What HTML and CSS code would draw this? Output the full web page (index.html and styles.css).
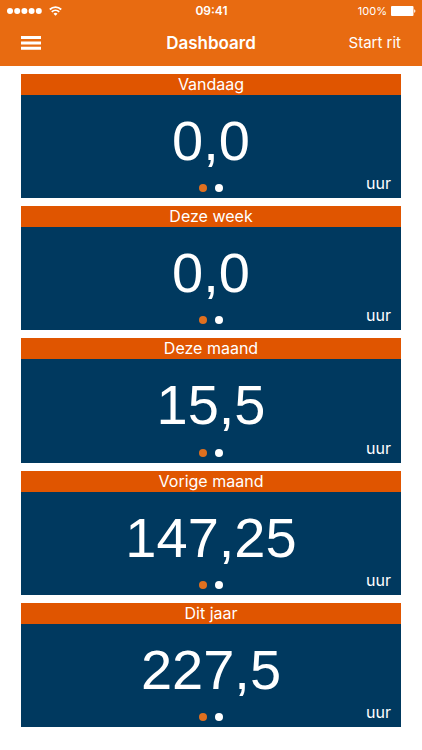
FILE: index.html
```html
<!DOCTYPE html>
<html lang="nl">
<head>
<meta charset="utf-8">
<meta name="viewport" content="width=device-width, initial-scale=1">
<title>Dashboard</title>
<link rel="stylesheet" href="styles.css">
</head>
<body>
<header class="top">
  <div class="status">
    <div class="status-left">
      <svg class="signal" width="35" height="6" viewBox="0 0 35 6" aria-hidden="true"><circle cx="3" cy="3" r="3"/><circle cx="10.2" cy="3" r="3"/><circle cx="17.4" cy="3" r="3"/><circle cx="24.6" cy="3" r="3"/><circle cx="31.8" cy="3" r="3"/></svg>
      <svg class="wifi" width="13" height="10" viewBox="0 0 13 10" aria-hidden="true"><path d="M.8 3.5a8.2 8.2 0 0 1 11.4 0M2.8 5.8a5.3 5.3 0 0 1 7.4 0"/><path class="wifi-core" d="M6.5 9.8 4.5 7.8a2.9 2.9 0 0 1 4 0z"/></svg>
    </div>
    <span class="time">09:41</span>
    <div class="status-right">
      <span class="percent">100%</span>
      <svg class="battery" width="25" height="10" viewBox="0 0 25 10" aria-hidden="true"><rect width="22.5" height="10" rx="1"/><path d="M23.2 3.2c1.6.4 1.6 3.2 0 3.6z"/></svg>
    </div>
  </div>
  <nav class="bar">
    <button class="menu" type="button" aria-label="Menu"><svg width="20" height="14" viewBox="0 0 20 14" aria-hidden="true"><path d="M0 0h20v3H0zM0 5.4h20v3H0zM0 10.8h20v3H0z"/></svg></button>
    <h1 class="title">Dashboard</h1>
    <button class="start" type="button">Start rit</button>
  </nav>
</header>
<main class="cards">
  <section class="card">
    <h2 class="card-title">Vandaag</h2>
    <div class="card-body">
      <p class="value">0,0</p>
      <div class="card-foot"><div class="dots"><button class="dot active" type="button" aria-label="Pagina 1"></button><button class="dot" type="button" aria-label="Pagina 2"></button></div><span class="unit">uur</span></div>
    </div>
  </section>
  <section class="card">
    <h2 class="card-title">Deze week</h2>
    <div class="card-body">
      <p class="value">0,0</p>
      <div class="card-foot"><div class="dots"><button class="dot active" type="button" aria-label="Pagina 1"></button><button class="dot" type="button" aria-label="Pagina 2"></button></div><span class="unit">uur</span></div>
    </div>
  </section>
  <section class="card">
    <h2 class="card-title">Deze maand</h2>
    <div class="card-body">
      <p class="value">15,5</p>
      <div class="card-foot"><div class="dots"><button class="dot active" type="button" aria-label="Pagina 1"></button><button class="dot" type="button" aria-label="Pagina 2"></button></div><span class="unit">uur</span></div>
    </div>
  </section>
  <section class="card">
    <h2 class="card-title">Vorige maand</h2>
    <div class="card-body">
      <p class="value">147,25</p>
      <div class="card-foot"><div class="dots"><button class="dot active" type="button" aria-label="Pagina 1"></button><button class="dot" type="button" aria-label="Pagina 2"></button></div><span class="unit">uur</span></div>
    </div>
  </section>
  <section class="card">
    <h2 class="card-title">Dit jaar</h2>
    <div class="card-body">
      <p class="value">227,5</p>
      <div class="card-foot"><div class="dots"><button class="dot active" type="button" aria-label="Pagina 1"></button><button class="dot" type="button" aria-label="Pagina 2"></button></div><span class="unit">uur</span></div>
    </div>
  </section>
</main>
</body>
</html>
```
FILE: styles.css
```css
* {
  box-sizing: border-box;
}

body {
  margin: 0;
  min-height: 100vh;
  display: flex;
  flex-direction: column;
  background: #fff;
  color: #fff;
  font-family: Inter, "Liberation Sans", sans-serif;
}

h1,
h2,
p {
  margin: 0;
  font-weight: 400;
}

button {
  padding: 0;
  border: 0;
  background: none;
  color: inherit;
  font: inherit;
}

svg {
  display: block;
  fill: #fff;
}

.top {
  background: #e86b11;
  padding-bottom: 2px;
}

.status,
.bar {
  display: grid;
  grid-template-columns: 1fr auto 1fr;
  align-items: center;
}

.status {
  height: 21px;
  padding: 0 6px 0 7px;
  font-size: 12px;
  line-height: 20px;
}

.status-left,
.status-right {
  display: flex;
  align-items: center;
}

.status-left {
  gap: 7px;
}

.status-right {
  justify-content: flex-end;
  gap: 4px;
}

.wifi {
  fill: none;
  stroke: #fff;
  stroke-width: 1.8;
}

.wifi-core {
  fill: #fff;
  stroke: none;
}

.time {
  font-weight: 600;
}

.percent {
  font-size: 11px;
}

.bar {
  height: 43px;
  padding: 0 21px;
}

.menu {
  justify-self: start;
}

.title {
  font-size: 17px;
  font-weight: 600;
  line-height: 24px;
}

.start {
  justify-self: end;
  font-size: 15px;
  line-height: 24px;
}

.cards {
  flex: 1;
  display: flex;
  flex-direction: column;
  gap: 8px;
  padding: 8px 21px 23px;
}

.card {
  flex: 1;
  display: flex;
  flex-direction: column;
  background: #00395f;
}

.card-title {
  background: #e05500;
  font-size: 16px;
  line-height: 21px;
  text-align: center;
}

.card-body {
  flex: 1;
  display: flex;
  flex-direction: column;
  justify-content: space-between;
  padding: 16px 10px 3px;
}

.value {
  font-family: "Liberation Sans", Arial, sans-serif;
  font-size: 56px;
  line-height: 60px;
  text-align: center;
}

.card-foot {
  display: grid;
  grid-template-columns: 1fr auto 1fr;
  align-items: end;
}

.dots {
  grid-column: 2;
  display: flex;
  gap: 8px;
  padding-bottom: 3px;
}

.dot {
  width: 8px;
  height: 8px;
  border-radius: 50%;
  background: #fff;
}

.dot.active {
  background: #e0701f;
}

.unit {
  justify-self: end;
  font-size: 16px;
  line-height: 24px;
}
```
